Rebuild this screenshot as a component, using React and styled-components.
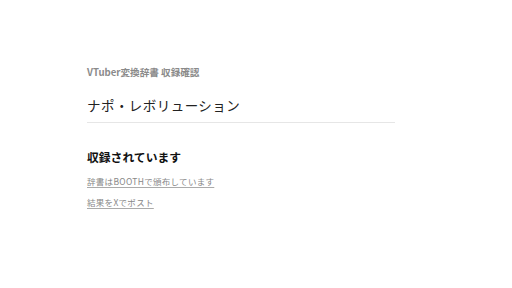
import styled, { createGlobalStyle } from "styled-components";

const Global = createGlobalStyle`
  body {
    margin: 0;
    background: #ffffff;
    font-family: "Noto Sans CJK JP", "Noto Sans", sans-serif;
  }
`;

const Page = styled.div`
  width: 308px;
  padding: 64px 0 0 87px;
`;

const Caption = styled.div`
  font-size: 9.6px;
  font-weight: 700;
  color: #8a8a8a;
  line-height: 16px;
`;

const Title = styled.h1`
  margin: 15px 0 0;
  font-size: 13.5px;
  font-weight: 400;
  letter-spacing: 0.45px;
  color: #222;
  line-height: 20px;
  padding-bottom: 7px;
  border-bottom: 1px solid #e6e6e6;
`;

const Status = styled.h2`
  margin: 25px 0 0;
  font-size: 11.8px;
  font-weight: 700;
  color: #111;
  line-height: 18px;
`;

const LinkList = styled.div`
  display: flex;
  flex-direction: column;
  gap: 7px;
  margin-top: 8px;
`;

const TextLink = styled.a`
  font-size: 8.5px;
  letter-spacing: 0.3px;
  color: #888;
  line-height: 14px;
  text-decoration: underline;
  text-underline-offset: 2px;
  text-decoration-color: #aaa;
  align-self: flex-start;
`;

export default function App() {
  return (
    <>
      <Global />
      <Page>
        <Caption>VTuber変換辞書 収録確認</Caption>
        <Title>ナポ・レボリューション</Title>
        <Status>収録されています</Status>
        <LinkList>
          <TextLink href="#">辞書はBOOTHで頒布しています</TextLink>
          <TextLink href="#">結果をXでポスト</TextLink>
        </LinkList>
      </Page>
    </>
  );
}
